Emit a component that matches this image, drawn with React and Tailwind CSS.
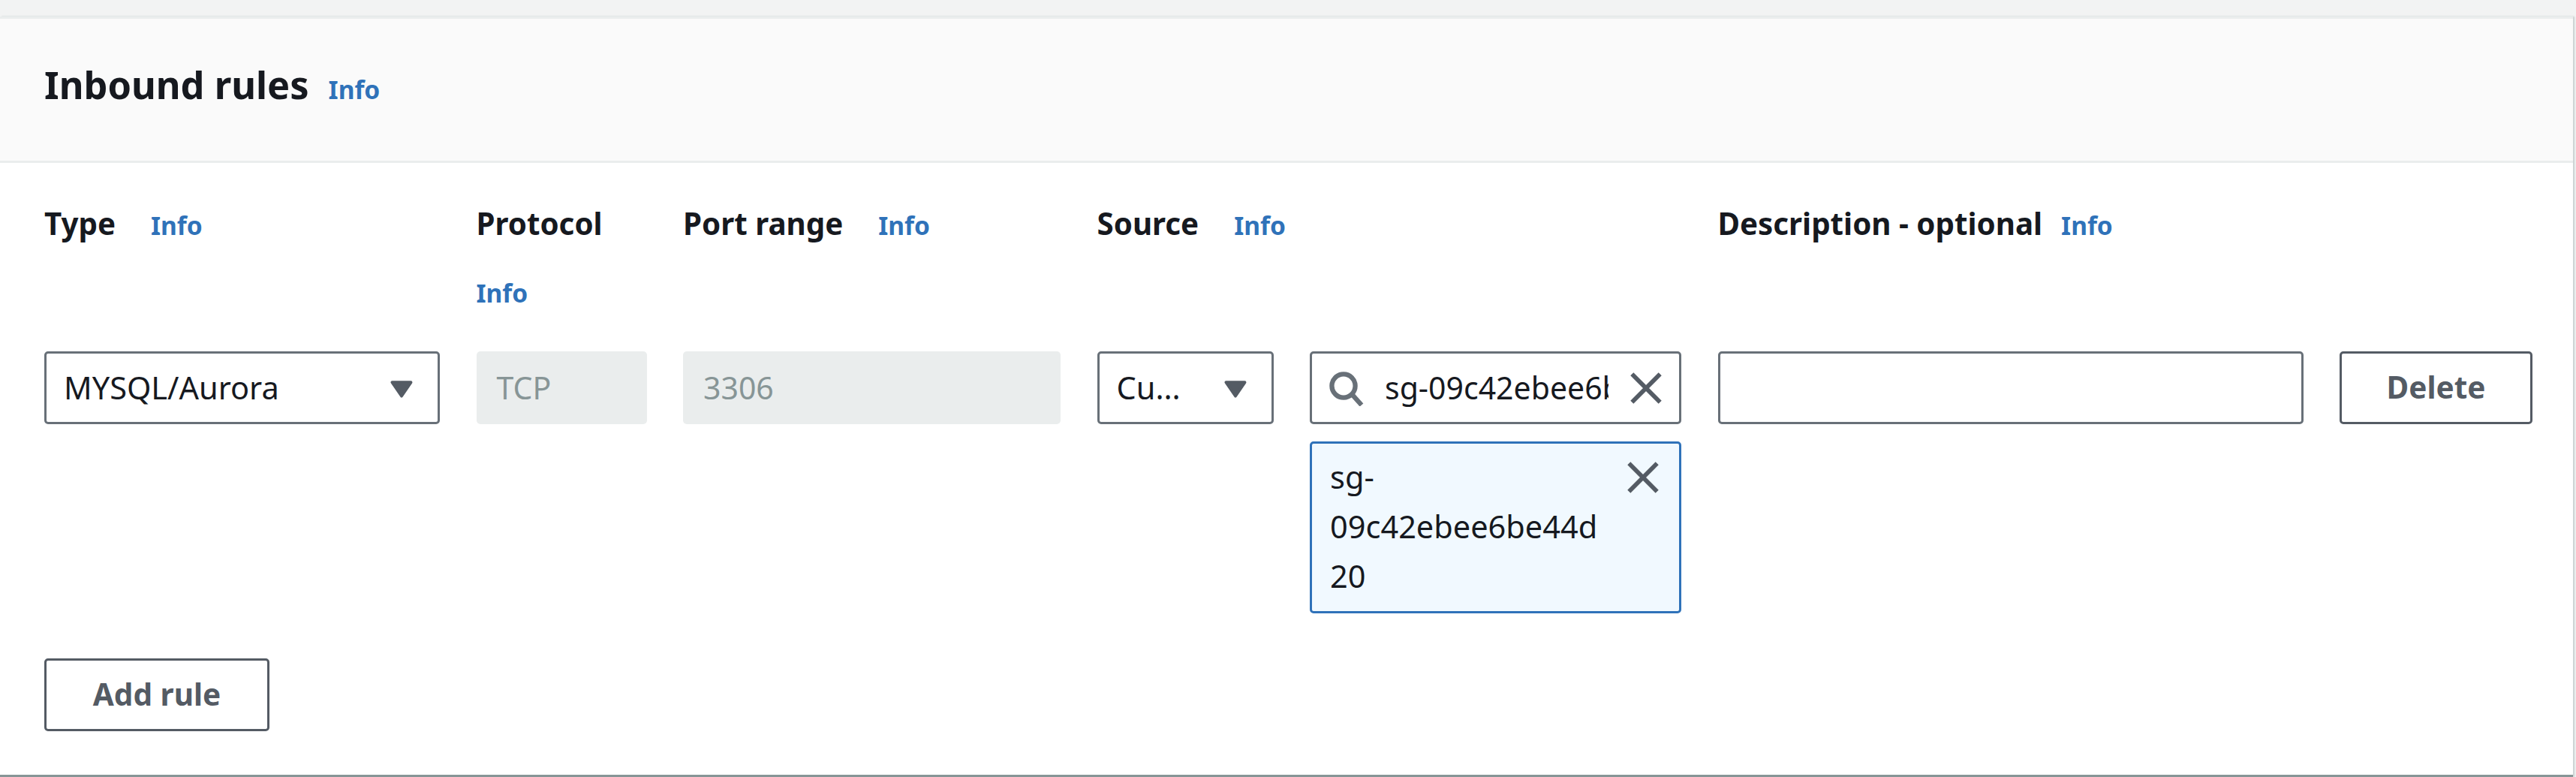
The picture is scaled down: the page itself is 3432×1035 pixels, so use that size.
// App.jsx
const font = { fontFamily: '"Noto Sans", sans-serif' };

function Info() {
  return <span className="text-[33.5px] font-bold leading-[60px] text-[#2f72b9]">Info</span>;
}

function Label({ text, gap = "gap-x-[47px]", className = "" }) {
  return (
    <div className={`flex flex-wrap items-baseline gap-y-[32px] ${gap} ${className}`}>
      <span className="text-[40.3px] font-bold leading-[60px] text-[#16191f]">{text}</span>
      <Info />
    </div>
  );
}

function Caret() {
  return (
    <svg viewBox="0 0 16 16" className="h-[44px] w-[44px] shrink-0 text-[#545b64]">
      <path d="M3.5 5.2h9L8 11.8z" fill="currentColor" stroke="currentColor" strokeWidth="1.5" strokeLinejoin="round" />
    </svg>
  );
}

function Close() {
  return (
    <svg viewBox="0 0 16 16" className="h-[44px] w-[44px] shrink-0 text-[#545b64]" fill="none" stroke="currentColor" strokeWidth="2.1">
      <path d="M1.2 1.2l13.6 13.6M14.8 1.2L1.2 14.8" />
    </svg>
  );
}

function Search() {
  return (
    <svg viewBox="0 0 16 16" className="h-[48px] w-[48px] shrink-0 text-[#687078]" fill="none" stroke="currentColor" strokeWidth="2.1">
      <circle cx="7" cy="7" r="5.2" />
      <path d="M10.7 10.7L15 15.5" />
    </svg>
  );
}

function Select({ value }) {
  return (
    <div className="flex h-[97px] items-center justify-between rounded-[5px] border-[3px] border-[#687078] bg-white pl-[23px] pr-[26px] text-[41.5px] text-[#16191f]">
      <span>{value}</span>
      <Caret />
    </div>
  );
}

function Disabled({ value }) {
  return (
    <div className="flex h-[97px] items-center rounded-[5px] bg-[#eaeded] pl-[27px] text-[41px] text-[#879596]">
      {value}
    </div>
  );
}

function Button({ label, className = "" }) {
  return (
    <button className={`flex h-[97px] items-center justify-center rounded-[5px] border-[3px] border-[#545b64] bg-white text-[40.5px] font-bold text-[#545b64] ${className}`}>
      {label}
    </button>
  );
}

export default function App() {
  return (
    <div className="h-[1035px] w-[3432px] overflow-hidden bg-[#f2f3f3] pt-[22px]" style={font}>
      <div className="mr-[4px] flex h-[1013px] flex-col border-t-[3px] border-b-[3px] border-t-[#eaeded] border-b-[#879596] bg-white shadow-[2px_0_2px_#c8cfcf]">
        <div className="box-content flex h-[181px] items-start border-b-[3px] border-[#eaeded] bg-[#fafafa] pb-[8px] px-[59px]">
          <h2 className="mt-[50px] flex items-baseline gap-[26px] text-[50.5px] font-bold text-[#16191f]">
            Inbound rules
            <Info />
          </h2>
        </div>

        <div className="px-[59px] pt-[51px]">
          <div className="grid grid-cols-[527px_227px_503px_235px_495px_780px_257px] gap-x-[48.5px]">
            <Label text="Type" />
            <Label text="Protocol" />
            <Label text="Port range" />
            <Label text="Source" className="col-span-2" />
            <Label text="Description - optional" gap="gap-x-[25px]" className="col-span-2" />
          </div>

          <div className="mt-[48px] grid grid-cols-[527px_227px_503px_235px_495px_780px_257px] items-start gap-x-[48.5px]">
            <Select value="MYSQL/Aurora" />
            <Disabled value="TCP" />
            <Disabled value="3306" />
            <Select value="Cu..." />
            <div className="flex flex-col gap-[23px]">
              <div className="flex h-[97px] items-center rounded-[5px] border-[3px] border-[#687078] bg-white pl-[21px] pr-[22px] text-[41px] text-[#16191f]">
                <Search />
                <span className="ml-[28px] w-[298px] overflow-hidden whitespace-nowrap">sg-09c42ebee6be44d20</span>
                <span className="ml-auto">
                  <Close />
                </span>
              </div>
              <div className="flex h-[229px] items-start justify-between rounded-[5px] border-[3px] border-[#2f72b9] bg-[#f1f9ff] pl-[24px] pr-[26px] pt-[11px] text-[41.5px] leading-[66px] text-[#16191f]">
                <span className="w-[380px] break-all">
                  sg-
                  <br />
                  09c42ebee6be44d
                  <br />
                  20
                </span>
                <span className="mt-[12px]">
                  <Close />
                </span>
              </div>
            </div>
            <div className="h-[97px] rounded-[5px] border-[3px] border-[#687078] bg-white" />
            <Button label="Delete" />
          </div>

          <Button label="Add rule" className="mt-[60px] w-[300px]" />
        </div>
      </div>
    </div>
  );
}
